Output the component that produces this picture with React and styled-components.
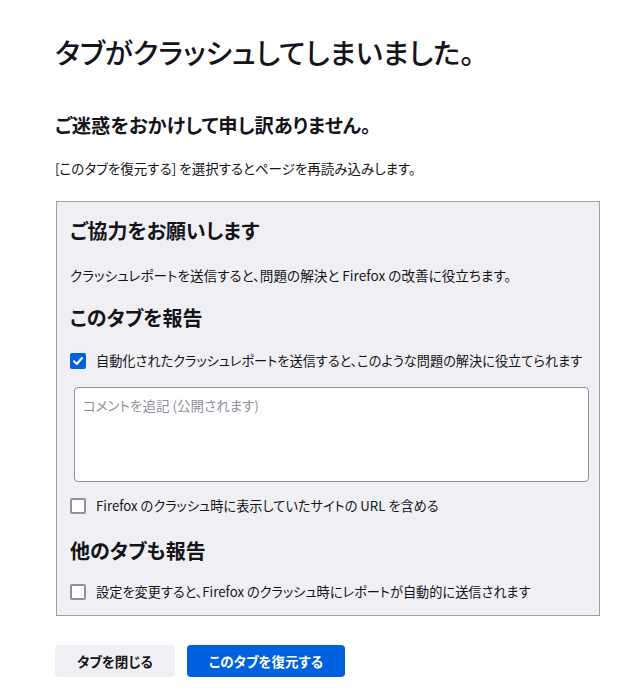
import React from 'react';
import styled, {createGlobalStyle} from 'styled-components';

const GlobalStyle = createGlobalStyle`
    html, body {
        margin: 0;
        padding: 0;
        background: #fff;
    }
    body {
        font-family: "Noto Sans CJK JP", "Noto Sans", sans-serif;
        font-feature-settings: "palt";
        color: #15141a;
    }
`;

const Page = styled.div`
    width: 545px;
    padding: 32px 0 19px 55px;
`;

const Title = styled.h1`
    margin: 0;
    font-size: 28.5px;
    line-height: 40px;
    font-weight: 500;
`;

const Subtitle = styled.h2`
    margin: 39px 0 0;
    font-size: 19.3px;
    line-height: 28px;
    font-weight: 600;
`;

const Hint = styled.p`
    margin: 19px 0 0;
    font-size: 13.5px;
    line-height: 20px;
`;

const Panel = styled.section`
    margin: 23px 0 0 1px;
    background: #f0f0f4;
    border: 1px solid #9e9ea6;
    padding: 15px 10px 13px 13px;
`;

const PanelHeading = styled.h3`
    margin: ${p => p.$gap || 0}px 0 0;
    font-size: 20px;
    line-height: 28px;
    font-weight: 600;
`;

const PanelText = styled.p`
    margin: 20px 0 0;
    font-size: 13.6px;
    line-height: 20px;
`;

const CheckRow = styled.label`
    display: flex;
    align-items: center;
    gap: 10px;
    margin-top: ${p => p.$gap}px;
    font-size: 13.2px;
    line-height: 20px;
    white-space: nowrap;
`;

const Box = styled.span`
    flex: none;
    width: 16px;
    height: 16px;
    box-sizing: border-box;
    border-radius: 2px;
    border: ${p => p.$checked ? 'none' : '2px solid #8f8f9d'};
    background: ${p => p.$checked ? '#0061e0' : '#fff'};
    display: flex;
    align-items: center;
    justify-content: center;
`;

const Comment = styled.textarea`
    display: block;
    box-sizing: border-box;
    width: 515px;
    height: 95px;
    margin: 16px 0 0 4px;
    padding: 7px 8px;
    border: 1px solid #8f8f9d;
    border-radius: 4px;
    background: #fff;
    resize: none;
    font-family: inherit;
    font-feature-settings: "palt";
    font-size: 13.5px;
    line-height: 20px;
    color: #15141a;
    &::placeholder {
        color: #8f8f9d;
    }
`;

const Buttons = styled.div`
    display: flex;
    gap: 12px;
    margin-top: 29px;
`;

const Button = styled.button`
    height: 32px;
    width: ${p => p.$width}px;
    border: none;
    border-radius: 4px;
    font-family: inherit;
    font-feature-settings: "palt";
    font-size: 13.5px;
    font-weight: 600;
    background: ${p => p.$primary ? '#0061e0' : '#f0f0f4'};
    color: ${p => p.$primary ? '#fff' : '#15141a'};
`;

const Checkbox = ({checked}) => (
    <Box $checked={checked}>
        {checked && (
            <svg width="12" height="12" viewBox="0 0 12 12">
                <path d="M2 6.3 L4.8 9 L10 3" fill="none" stroke="#fff" strokeWidth="2" strokeLinecap="round" strokeLinejoin="round" />
            </svg>
        )}
    </Box>
);

const App = () => {
    return <>
        <GlobalStyle />
        <Page>
            <Title>タブがクラッシュしてしまいました。</Title>
            <Subtitle>ご迷惑をおかけして申し訳ありません。</Subtitle>
            <Hint>[このタブを復元する] を選択するとページを再読み込みします。</Hint>
            <Panel>
                <PanelHeading>ご協力をお願いします</PanelHeading>
                <PanelText>クラッシュレポートを送信すると、問題の解決と Firefox の改善に役立ちます。</PanelText>
                <PanelHeading $gap={19}>このタブを報告</PanelHeading>
                <CheckRow $gap={19}>
                    <Checkbox checked />
                    自動化されたクラッシュレポートを送信すると、このような問題の解決に役立てられます
                </CheckRow>
                <Comment placeholder="コメントを追記 (公開されます)" />
                <CheckRow $gap={14}>
                    <Checkbox />
                    Firefox のクラッシュ時に表示していたサイトの URL を含める
                </CheckRow>
                <PanelHeading $gap={21}>他のタブも報告</PanelHeading>
                <CheckRow $gap={17}>
                    <Checkbox />
                    設定を変更すると、Firefox のクラッシュ時にレポートが自動的に送信されます
                </CheckRow>
            </Panel>
            <Buttons>
                <Button $width={120}>タブを閉じる</Button>
                <Button $width={158} $primary>このタブを復元する</Button>
            </Buttons>
        </Page>
    </>
}

export default App;
